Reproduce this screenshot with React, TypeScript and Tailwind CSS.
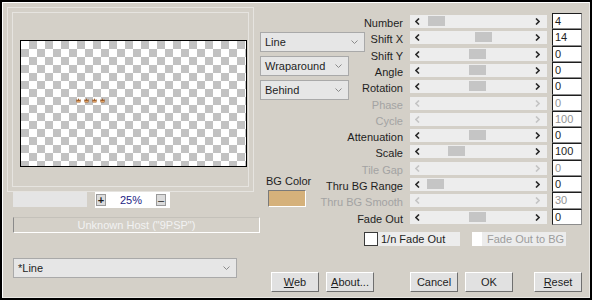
import { Fragment } from 'react';

type Param = {
  label: string;
  value: string;
  thumb?: number;
  disabled?: boolean;
  tall?: boolean;
};

const params: Param[] = [
  { label: 'Number', value: '4', thumb: 18 },
  { label: 'Shift X', value: '14', thumb: 65, tall: true },
  { label: 'Shift Y', value: '0', thumb: 59 },
  { label: 'Angle', value: '0', thumb: 59 },
  { label: 'Rotation', value: '0', thumb: 59, tall: true },
  { label: 'Phase', value: '0', disabled: true },
  { label: 'Cycle', value: '100', disabled: true },
  { label: 'Attenuation', value: '0', thumb: 59 },
  { label: 'Scale', value: '100', thumb: 38, tall: true },
  { label: 'Tile Gap', value: '0', disabled: true },
  { label: 'Thru BG Range', value: '0', thumb: 17 },
  { label: 'Thru BG Smooth', value: '30', disabled: true, tall: true },
  { label: 'Fade Out', value: '0', thumb: 59 },
];

function ComboArrow() {
  return (
    <svg width="7" height="4" viewBox="0 0 7 4" className="shrink-0">
      <polyline points="0.5,0.5 3.5,3.5 6.5,0.5" fill="none" stroke="#8a8a8a" strokeWidth="1" />
    </svg>
  );
}

function Combo({ text, className }: { text: string; className: string }) {
  return (
    <div
      className={`flex items-center justify-between border border-[#a9a9a9] bg-[#e6e6e6] pl-[4px] pr-[6px] ${className}`}
    >
      <span>{text}</span>
      <ComboArrow />
    </div>
  );
}

function Chevron({ dir, disabled }: { dir: 'left' | 'right'; disabled?: boolean }) {
  const pts = dir === 'left' ? '4,0.5 1,3.5 4,6.5' : '1,0.5 4,3.5 1,6.5';
  return (
    <svg width="5" height="7" viewBox="0 0 5 7" className="relative z-10 shrink-0">
      <polyline
        points={pts}
        fill="none"
        stroke={disabled ? '#c4c4c4' : '#2a2a2a'}
        strokeWidth="1.6"
      />
    </svg>
  );
}

function Button({ children }: { children: React.ReactNode }) {
  return (
    <div className="flex h-[20px] w-[48px] items-center justify-center border border-t-white border-l-white border-r-[#6f6f6f] border-b-[#6f6f6f] bg-[#e1e1e1]">
      {children}
    </div>
  );
}

function Crown() {
  return (
    <svg width="5" height="5" viewBox="0 0 5 5">
      <path d="M0 1 L1.2 2.2 L2.5 0.3 L3.8 2.2 L5 1 L4.4 4.6 L0.6 4.6 Z" fill="#a0602c" />
      <rect x="1" y="3" width="3" height="1" fill="#e0a060" />
    </svg>
  );
}

export default function App() {
  return (
    <div className="h-[300px] w-[592px] border-2 border-black font-['Liberation_Sans',Arial,sans-serif] text-[11px] leading-[13px] text-[#1e1e1e]">
      <div className="flex h-full border border-t-white border-l-white border-r-[#e9e7e3] border-b-[#e9e7e3] bg-[#d4d0c8]">
        {/* Left column: preview */}
        <div className="flex w-[255px] shrink-0 flex-col pl-[4px] pt-[4px]">
          <div className="h-[185px] w-[247px] border border-[#e6e4e0] p-[4px]">
            <div className="h-[175px] w-[237px] border border-[#e6e4e0] pl-[7px] pt-[27px]">
              <div className="h-[127px] w-[227px] border border-black bg-[conic-gradient(#c2c2c2_25%,#ffffff_0_50%,#c2c2c2_0_75%,#ffffff_0)] bg-[length:16px_16px] pl-[55px] pt-[57px]">
                <div className="flex gap-[3px]">
                  <Crown />
                  <Crown />
                  <Crown />
                  <Crown />
                </div>
              </div>
            </div>
          </div>

          {/* zoom row */}
          <div className="flex items-start pl-[6px]">
            <div className="h-[15px] w-[74px] bg-[#e5e5e5]" />
            <div className="ml-[8px] flex h-[16px] w-[75px] items-center bg-white pl-[1px]">
              <div className="flex h-[12px] w-[10px] items-center justify-center border border-[#9a9a9a] bg-[#dcdcdc] text-[11px] font-bold leading-none">
                +
              </div>
              <span className="ml-[14px] text-[#1c1c84]">25%</span>
              <div className="ml-[14px] flex h-[12px] w-[10px] items-center justify-center border border-[#9a9a9a] bg-[#dcdcdc] text-[11px] leading-none">
                –
              </div>
            </div>
          </div>

          <div className="ml-[6px] mt-[9px] flex h-[16px] w-[247px] items-center justify-center border border-l-[#8a8a8a] border-t-[#c4c1ba] border-r-white border-b-white text-[#f2f2f2]">
            Unknown Host ("9PSP")
          </div>

          <Combo text="*Line" className="ml-[6px] mt-[25px] h-[20px] w-[224px]" />
        </div>

        {/* Right section */}
        <div className="flex flex-1 flex-col pt-[10px]">
          <div className="flex">
            <div className="flex w-[110px] shrink-0 flex-col">
              <Combo text="Line" className="ml-[2px] mt-[19px] h-[20px] w-[105px]" />
              <Combo text="Wraparound" className="ml-[2px] mt-[4px] h-[20px] w-[89px]" />
              <Combo text="Behind" className="ml-[2px] mt-[4px] h-[20px] w-[89px]" />
              <div className="ml-[8px] mt-[75px]">BG Color</div>
              <div className="ml-[10px] mt-[2px] h-[17px] w-[38px] border border-t-[#7a7a7a] border-l-[#7a7a7a] border-r-white border-b-white bg-[#d5b17b]" />
            </div>

            <div className="flex flex-col">
              {params.map((p) => (
                <Fragment key={p.label}>
                  <div className={`flex ${p.tall ? 'h-[17px]' : 'h-4'}`}>
                    <div className="flex w-[35px] justify-end pt-[2px] leading-[16px]">
                      <span className={`whitespace-nowrap ${p.disabled ? 'text-[#a3a3a3]' : ''}`}>
                        {p.label}
                      </span>
                    </div>
                    <div className="relative ml-[7px] mt-[2px] flex h-[13px] w-[137px] items-center justify-between bg-[#ededed] pl-[5px] pr-[7px]">
                      <Chevron dir="left" disabled={p.disabled} />
                      {p.thumb !== undefined && (
                        <div
                          className="absolute top-[1px] h-[10px] w-[17px] bg-[#c5c5c5]"
                          style={{ left: p.thumb }}
                        />
                      )}
                      <Chevron dir="right" disabled={p.disabled} />
                    </div>
                    <div
                      className={`ml-[5px] h-full w-[30px] border border-t-[#1e1e1e] border-l-[#1e1e1e] border-r-[#8c8c8c] border-b-[#8c8c8c] bg-white pl-[2px] leading-[14px] ${
                        p.disabled ? 'text-[#939393]' : ''
                      }`}
                    >
                      {p.value}
                    </div>
                  </div>
                </Fragment>
              ))}
            </div>
          </div>

          {/* checkboxes */}
          <div className="ml-[106px] mt-[7px] flex h-[14px] items-stretch">
            <div className="w-[14px] border border-[#3a3a3a] bg-white" />
            <div className="flex w-[82px] items-center bg-[#ececec] pl-[3px]">1/n Fade Out</div>
            <div className="ml-[12px] w-[10px] bg-white" />
            <div className="flex w-[84px] items-center bg-[#ececec] pl-[5px] text-[#9c9c9c]">
              Fade Out to BG
            </div>
          </div>

          {/* buttons */}
          <div className="ml-[13px] mt-[26px] flex">
            <Button>
              <span>
                <span className="underline">W</span>eb
              </span>
            </Button>
            <div className="ml-[7px]">
              <Button>
                <span>
                  <span className="underline">A</span>bout...
                </span>
              </Button>
            </div>
            <div className="ml-[36px]">
              <Button>Cancel</Button>
            </div>
            <div className="ml-[7px]">
              <Button>OK</Button>
            </div>
            <div className="ml-[21px]">
              <Button>
                <span>
                  <span className="underline">R</span>eset
                </span>
              </Button>
            </div>
          </div>
        </div>
      </div>
    </div>
  );
}
